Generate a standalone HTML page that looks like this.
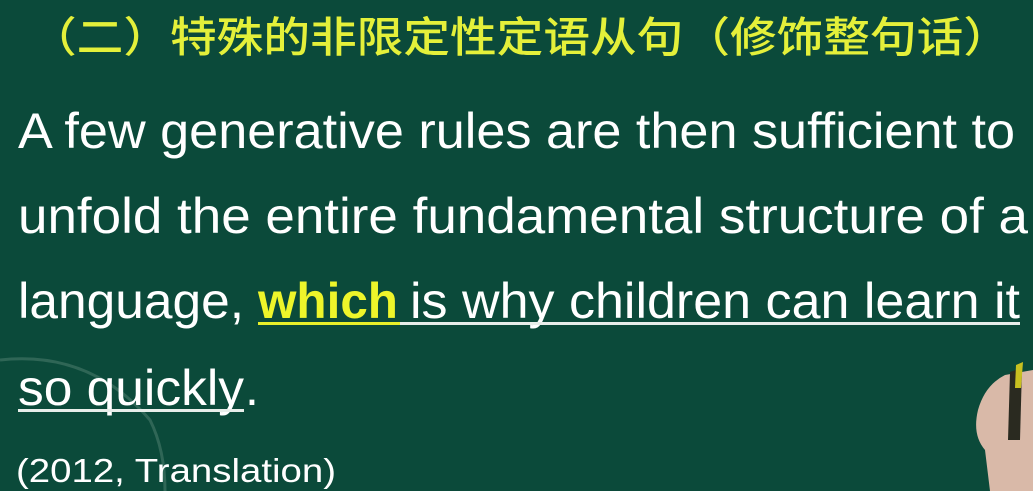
<!DOCTYPE html>
<html><head><meta charset="utf-8"><style>
html,body{margin:0;padding:0;background:#0b4a3a;overflow:hidden;width:1033px;height:491px}
svg{display:block}
</style></head><body>
<svg width="1033" height="491" xmlns="http://www.w3.org/2000/svg">
<rect width="1033" height="491" fill="#0b4a3a"/>
<path d="M0 360 Q90 350 150 420 Q165 450 165 491" fill="none" stroke="#5a8a7a" stroke-width="3" opacity="0.45"/>
<text x="30" y="52" textLength="980" lengthAdjust="spacingAndGlyphs" font-family="'Noto Sans CJK SC',sans-serif" font-size="42" font-weight="500" fill="#e4f03a">（二）特殊的非限定性定语从句（修饰整句话）</text>
<g font-family="'Liberation Sans',sans-serif" font-size="50" fill="#ffffff">
<text x="18" y="148" textLength="997" lengthAdjust="spacingAndGlyphs">A few generative rules are then sufficient to</text>
<text x="18" y="233" textLength="1010" lengthAdjust="spacingAndGlyphs">unfold the entire fundamental structure of a</text>
<text x="18" y="318" textLength="226" lengthAdjust="spacingAndGlyphs">language,</text>
<text x="258" y="318" textLength="140" lengthAdjust="spacingAndGlyphs" font-weight="bold" fill="#eef52a">which</text>
<text x="410" y="318" textLength="610" lengthAdjust="spacingAndGlyphs">is why children can learn it</text>
<text x="18" y="405" textLength="226" lengthAdjust="spacingAndGlyphs">so quickly</text>
<text x="245" y="405">.</text>
<text x="16" y="482" font-size="33" textLength="320" lengthAdjust="spacingAndGlyphs">(2012, Translation)</text>
</g>
<rect x="258" y="322" width="142" height="3" fill="#e8f02a"/>
<rect x="400" y="322" width="620" height="3" fill="#e8eeea"/>
<rect x="18" y="409" width="226" height="3" fill="#e8eeea"/>
<path d="M1005 375 Q985 385 978 410 Q972 435 985 450 L990 491 L1033 491 L1033 370 Z" fill="#d9b9a8"/>
<path d="M1010 372 L1022 368 L1020 440 L1008 440 Z" fill="#2a2a20"/>
<path d="M1016 365 L1023 362 L1021 388 L1015 388 Z" fill="#c8c020"/>
</svg>
</body></html>
